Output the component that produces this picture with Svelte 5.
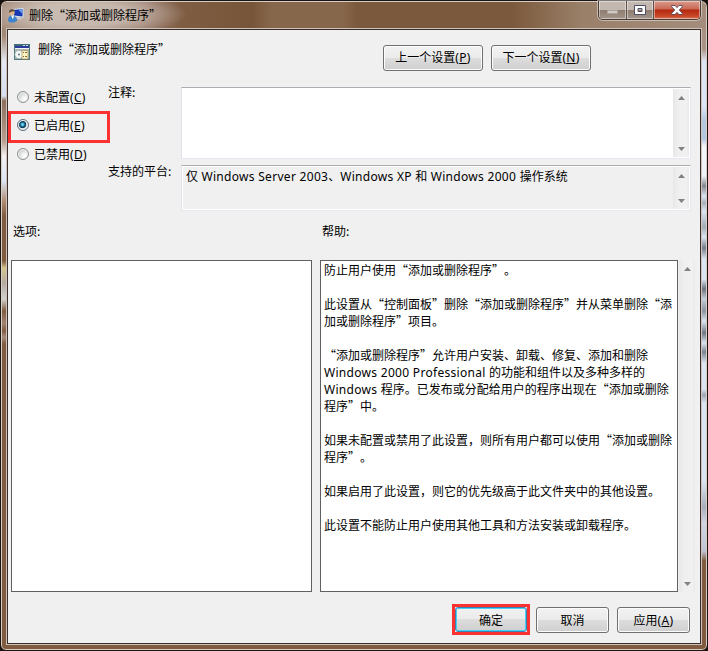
<script lang="ts">
	type State = 'C' | 'E' | 'D';

	let selected: State = $state('E');

	const states: { text: string; key: State }[] = [
		{ text: '未配置', key: 'C' },
		{ text: '已启用', key: 'E' },
		{ text: '已禁用', key: 'D' }
	];

	const title = '删除“添加或删除程序”';

	const help = [
		'防止用户使用“添加或删除程序”。',
		'',
		'此设置从“控制面板”删除“添加或删除程序”并从菜单删除“添',
		'加或删除程序”项目。',
		'',
		'“添加或删除程序”允许用户安装、卸载、修复、添加和删除',
		'Windows 2000 Professional 的功能和组件以及多种多样的',
		'Windows 程序。已发布或分配给用户的程序出现在“添加或删除',
		'程序”中。',
		'',
		'如果未配置或禁用了此设置，则所有用户都可以使用“添加或删除',
		'程序”。',
		'',
		'如果启用了此设置，则它的优先级高于此文件夹中的其他设置。',
		'',
		'此设置不能防止用户使用其他工具和方法安装或卸载程序。'
	];

	// latin runs use their own face, quotes stay full width
	const runs = (line: string) => line.split(/([A-Za-z0-9 ]+)/).filter(Boolean);
</script>

{#snippet mixed(line: string)}
	{#each runs(line) as run, i (i)}{#if /[A-Za-z0-9 ]/.test(run)}<span class="latin">{run}</span
			>{:else}{run}{/if}{/each}
{/snippet}

{#snippet key(letter: string)}<span class="latin">(<u>{letter}</u>)</span>{/snippet}

{#snippet scrollbar()}
	<div class="scrollbar">
		<svg width="7" height="4" viewBox="0 0 7 4"><path d="M3.500 0 7 4H0z" fill="#7f8185" /></svg>
		<svg width="7" height="4" viewBox="0 0 7 4"><path d="M0 0H7L3.500 4z" fill="#7f8185" /></svg>
	</div>
{/snippet}

<div class="window">
	<header class="titlebar">
		<svg class="app-icon" width="16" height="16" viewBox="0 0 16 16">
			<path d="M4.500 2 15.500 1V10.500L5 9.500z" fill="#d9e4ef" />
			<path d="M5.500 3 14.500 2V9.500L6 8.500z" fill="#1538b4" />
			<path d="M10 2.500 14.500 2V7z" fill="#6d9ae8" />
			<path d="M9 10.300h3l2 2H8z" fill="#c9d2da" />
			<circle cx="4" cy="5.500" r="2.700" fill="#dfb48a" />
			<path d="M1.200 6Q.6 2.500 4 2.300T6.800 4.500Q4 3.500 1.200 6" fill="#5b4b3c" />
			<path d="M0 14Q0 8.500 4 8.500T9.500 13.500L6 15.500H2z" fill="#3b83cf" />
			<path d="M3 8.500h3l-1 4z" fill="#fff" />
		</svg>
		<span class="caption">{title}</span>
		<div class="controls">
			<button class="control min" aria-label="最小化">
				<svg width="12" height="5" viewBox="0 0 12 5">
					<rect x=".5" y=".5" width="10" height="3" fill="#d0c8c2" stroke="#aaa19b" />
				</svg>
			</button>
			<button class="control max" aria-label="最大化">
				<svg width="12" height="10" viewBox="0 0 12 10">
					<path
						d="M.5.5h11v9H.5zM4 3.500h4v3H4z"
						fill="#fff"
						fill-rule="evenodd"
						stroke="#4c4d60"
					/>
				</svg>
			</button>
			<button class="control close" aria-label="关闭">
				<svg width="12" height="10" viewBox="0 0 12 10">
					<path
						d="M.7.5h3.300L6 2.600 8 .5h3.300v1.300L8.300 5l3 3.200v1.300H8L6 7.400 4 9.500H.7V8.200l3-3.200-3-3.200z"
						fill="#fff"
						stroke="#4c4557"
						stroke-width=".9"
					/>
				</svg>
			</button>
		</div>
	</header>

	<main class="client">
		<div class="heading">
			<svg class="policy-icon" width="16" height="16" viewBox="0 0 16 16">
				<path d="M0 0h16v16H0z" fill="#a9bab9" />
				<path d="M0 0h16v2H0z" fill="#3f6d76" />
				<path d="M1 2h14v2H1z" fill="#2d3b9e" />
				<path d="M0 2h1v14H0zM15 2h1v14h-1zM0 15h16v1H0z" fill="#50757a" />
				<path d="M1 4h14v1H1z" fill="#f4f6f4" />
				<path d="M9 1h2v1H9zM12 1h2v1h-2z" fill="#cfe0e4" />
				<circle cx="5" cy="10.500" r="4.200" fill="#f5f5f5" stroke="#8ba39c" stroke-width=".7" />
				<circle cx="5" cy="10.500" r="1" fill="#587478" />
				<path d="M8 6.500h6V15H8z" fill="#fff4c4" stroke="#a48e50" stroke-width=".7" />
				<path d="M9 8h1v1H9zM11 8h2v1h-2zM9 12h1v1H9zM11 12h2v1h-2z" fill="#756744" />
			</svg>
			<span class="name">{title}</span>
			<div class="nav">
				<button class="button">上一个设置{@render key('P')}</button>
				<button class="button">下一个设置{@render key('N')}</button>
			</div>
		</div>

		<div class="settings">
			<div class="radios">
				{#each states as item (item.key)}
					<label class="radio" class:marked={item.key === 'E'}>
						<input type="radio" name="state" value={item.key} bind:group={selected} />
						<span>{item.text}{@render key(item.key)}</span>
					</label>
				{/each}
			</div>
			<div class="fields">
				<div class="field comment">
					<span class="field-label">注释:</span>
					<div class="box">
						<div class="content"></div>
						{@render scrollbar()}
					</div>
				</div>
				<div class="field platform">
					<span class="field-label">支持的平台:</span>
					<div class="box">
						<div class="content">
							{@render mixed('仅 Windows Server 2003、Windows XP 和 Windows 2000 操作系统')}
						</div>
						{@render scrollbar()}
					</div>
				</div>
			</div>
		</div>

		<div class="panes">
			<section class="options">
				<h2>选项:</h2>
				<div class="pane"></div>
			</section>
			<section class="help">
				<h2>帮助:</h2>
				<div class="help-row">
					<div class="pane">
						{#each help as line, i (i)}
							<p>{@render mixed(line)}</p>
						{/each}
					</div>
					{@render scrollbar()}
				</div>
			</section>
		</div>

		<footer class="actions">
			<div class="mark"><button class="button default">确定</button></div>
			<button class="button">取消</button>
			<button class="button">应用{@render key('A')}</button>
		</footer>
	</main>
</div>

<style>
	:global(body) {
		background: #17120f;
		overflow: hidden;
	}

	.window {
		box-sizing: border-box;
		width: 708px;
		height: 651px;
		padding: 1px 6px 6px 5px;
		border: 1px solid #1b1512;
		border-radius: 7px 7px 6px 6px;
		box-shadow: inset 0 0 0 1px #d9cec5;
		font-family: 'Noto Sans CJK SC', sans-serif;
		font-size: 12px;
		line-height: 17px;
		color: #000;
		text-spacing-trim: space-all;
		background:
			linear-gradient(
					#a18977 0,
					#a18977 35px,
					#e4e9f5 60px,
					#d5dff0 95px,
					#8d6f5c 100px,
					#b79f90 140px,
					#f4f1f3 155px,
					#dce4f4 180px,
					#b08c74 200px,
					#805b40 215px,
					#805b40 260px,
					#d2c48b 267px,
					#b5aaa0 282px,
					#d2d1ce 298px,
					#805b40 310px,
					#a08370 322px,
					#805b40 330px,
					#a58b7c 336px,
					#805b40 343px
				)
				left / 8px 100% no-repeat,
			linear-gradient(
					#a18977 0,
					#a99486 48px,
					#dfe5f3 60px,
					#dce6f6 105px,
					#b3c8e0 120px,
					#b3c8e0 138px,
					#f5f6fa 145px,
					#eef2f8 175px,
					#85858d 185px,
					#dce6f2 195px,
					#aab1bb 202px,
					#dce6f2 210px,
					#a3abb5 226px,
					#dce6f2 236px,
					#777d88 247px,
					#dce6f2 258px,
					#dce6f2 278px,
					#6f747f 288px,
					#c5ced9 298px,
					#8c929e 310px,
					#dce6f2 320px,
					#717783 332px,
					#dce6f2 342px,
					#7d8390 351px,
					#dce6f2 362px,
					#dce6f2 388px,
					#a0a6b2 394px,
					#dce6f2 402px,
					#dce6f2 480px,
					#a9aebb 506px,
					#d1d6e2 522px,
					#bfc5d5 550px,
					#805b40 560px
				)
				right / 8px 100% no-repeat,
			#805b40;
	}

	.titlebar {
		display: flex;
		align-items: flex-start;
		height: 27px;
		padding-left: 6px;
		margin: 0 -5px 0 -4px;
		background:
			radial-gradient(ellipse 105px 24px at 80px 12px, #cfc3bad0 0 45%, transparent),
			linear-gradient(
				90deg,
				#a08775,
				#b09b8c 40px,
				#98796a 140px,
				#7f5d43 180px,
				#775538 250px,
				#87674c 270px,
				#87674c 340px,
				#7b593c 355px,
				#7b593c 510px,
				#9a8069 580px,
				#a48d7c
			);
		border-radius: 5px 5px 0 0;
	}

	.app-icon {
		margin: 5px 5px 0 0;
	}

	.caption {
		margin-top: 4px;
	}

	.controls {
		display: flex;
		box-sizing: border-box;
		height: 19px;
		margin: -1px 5px 0 auto;
		border: 1px solid #493c35;
		border-top: 0;
		border-radius: 0 0 5px 5px;
		box-shadow: 0 0 0 1px #ffffff70;
		overflow: hidden;
	}

	.control {
		display: flex;
		align-items: center;
		justify-content: center;
		width: 28px;
		padding: 0;
		border: 0;
		border-right: 1px solid #5e5048;
		box-shadow: inset 0 0 0 1px #ffffff70;
		background: linear-gradient(#c3b8b0 0 48%, #8d7b6e 50%, #a3968c);

		&.min {
			padding-top: 5px;
		}

		&.max {
			width: 27px;
		}

		&.close {
			width: 46px;
			border-right: 0;
			background: linear-gradient(#d99a8a, #cb6a55 44%, #b5280f 50%, #c8492a 85%, #d87a5a);
		}
	}

	.client {
		display: flex;
		flex-direction: column;
		box-sizing: border-box;
		width: 694px;
		height: 615px;
		margin-left: 1px;
		border: 1px solid #382d28;
		outline: 1px solid #cec3bb;
		background: #f0f0f0;
	}

	.heading {
		display: flex;
		align-items: flex-start;
		height: 57px;
		padding: 0 109px 0 6px;
	}

	.policy-icon {
		margin: 14px 8px 0 0;
	}

	.name {
		margin-top: 10px;
	}

	.nav {
		display: flex;
		gap: 8px;
		margin: 15px 0 0 auto;

		.button {
			width: 100px;
			padding-bottom: 2px;
		}
	}

	.button {
		box-sizing: border-box;
		width: 73px;
		height: 26px;
		padding: 0;
		border: 1px solid #707070;
		border-radius: 3px;
		box-shadow: inset 0 0 0 1px #fcfcfc;
		background: linear-gradient(#f2f2f2, #ebebeb 48%, #dddddd 50%, #cfcfcf);
		color: #000;
		font: inherit;
		white-space: nowrap;
	}

	.latin {
		font-family: 'Noto Sans', sans-serif;
		letter-spacing: 0.3px;
	}

	u {
		text-underline-offset: 1px;
	}

	.settings {
		display: flex;
		height: 124px;
	}

	.radios {
		width: 100px;
		padding-top: 1px;
	}

	.radio {
		display: flex;
		align-items: center;
		box-sizing: border-box;
		height: 28px;
		padding: 0 0 10px 9px;
		gap: 5px;
		white-space: nowrap;

		&:first-child {
			height: 23px;
			padding-bottom: 5px;
		}

		&.marked {
			width: 102px;
			height: 32px;
			padding: 0 0 4px 6px;
			border: 3px solid #fa3232;
		}

		&:last-child {
			padding: 0 0 7px 9px;
		}
	}

	input {
		appearance: none;
		box-sizing: border-box;
		width: 12px;
		height: 12px;
		margin: 0;
		border: 1px solid #8e8f8f;
		border-radius: 50%;
		background: radial-gradient(circle at 70% 70%, #fff 10%, #d6d9db 60%, #b8bdc1);
		box-shadow: inset 0 0 0 1px #f4f4f4;

		&:checked {
			border-color: #5b6d79;
			background: radial-gradient(
				circle at 45% 45%,
				#71d5f0 0 10%,
				#15688f 28%,
				#092f4c 44%,
				#d5dde2 50%
			);
		}
	}

	.fields {
		display: flex;
		flex-direction: column;
		gap: 6px;
	}

	.field {
		display: flex;
	}

	.field-label {
		width: 73px;
		margin-top: -4px;
	}

	.platform .field-label {
		margin-top: -3px;
	}

	.box {
		display: flex;
		box-sizing: border-box;
		width: 510px;
		height: 72px;
		padding: 1px;
		border: 1px solid #e3e9ef;
		border-top-color: #abadb3;
		border-left-color: #e2e3ea;
		background: #fff;
	}

	.platform .box {
		height: 46px;
		box-shadow: inset 0 0 0 1px #fff;
		background: #f0f0f0;
	}

	.content {
		flex: 1;
		padding: 1px 3px;
		white-space: nowrap;
	}

	.platform .content {
		padding-top: 0;
	}

	.scrollbar {
		display: flex;
		flex-direction: column;
		align-items: center;
		justify-content: space-between;
		box-sizing: border-box;
		width: 16px;
		padding: 7px 0 6px;
		background: linear-gradient(90deg, #e7e7e7, #efefef 30%, #f1f1f1 80%, #eaeaea);
	}

	.panes {
		display: flex;
		gap: 8px;
		padding-left: 3px;
	}

	h2 {
		height: 49px;
		margin: 0;
		padding-left: 2px;
		font-size: inherit;
		font-weight: 400;
		line-height: 40px;
	}

	.pane {
		box-sizing: border-box;
		width: 301px;
		height: 332px;
		border: 1px solid #5f5f64;
		background: #fff;
	}

	.help-row {
		display: flex;
		gap: 1px;

		.pane {
			width: 358px;
			padding: 0 3px;
		}
	}

	p {
		height: 17px;
		margin: 0;
		white-space: nowrap;
	}

	.actions {
		display: flex;
		align-items: center;
		justify-content: flex-end;
		gap: 8px;
		padding: 12px 10px 0 0;
	}

	.mark {
		margin-right: -2px;
		border: 3px solid #fa3232;

		.button {
			display: block;
			width: 72px;
			height: 25px;
		}
	}

	.default {
		border-color: #3c7fb1;
		box-shadow: inset 0 0 0 1px #48d0f5;
	}
</style>
